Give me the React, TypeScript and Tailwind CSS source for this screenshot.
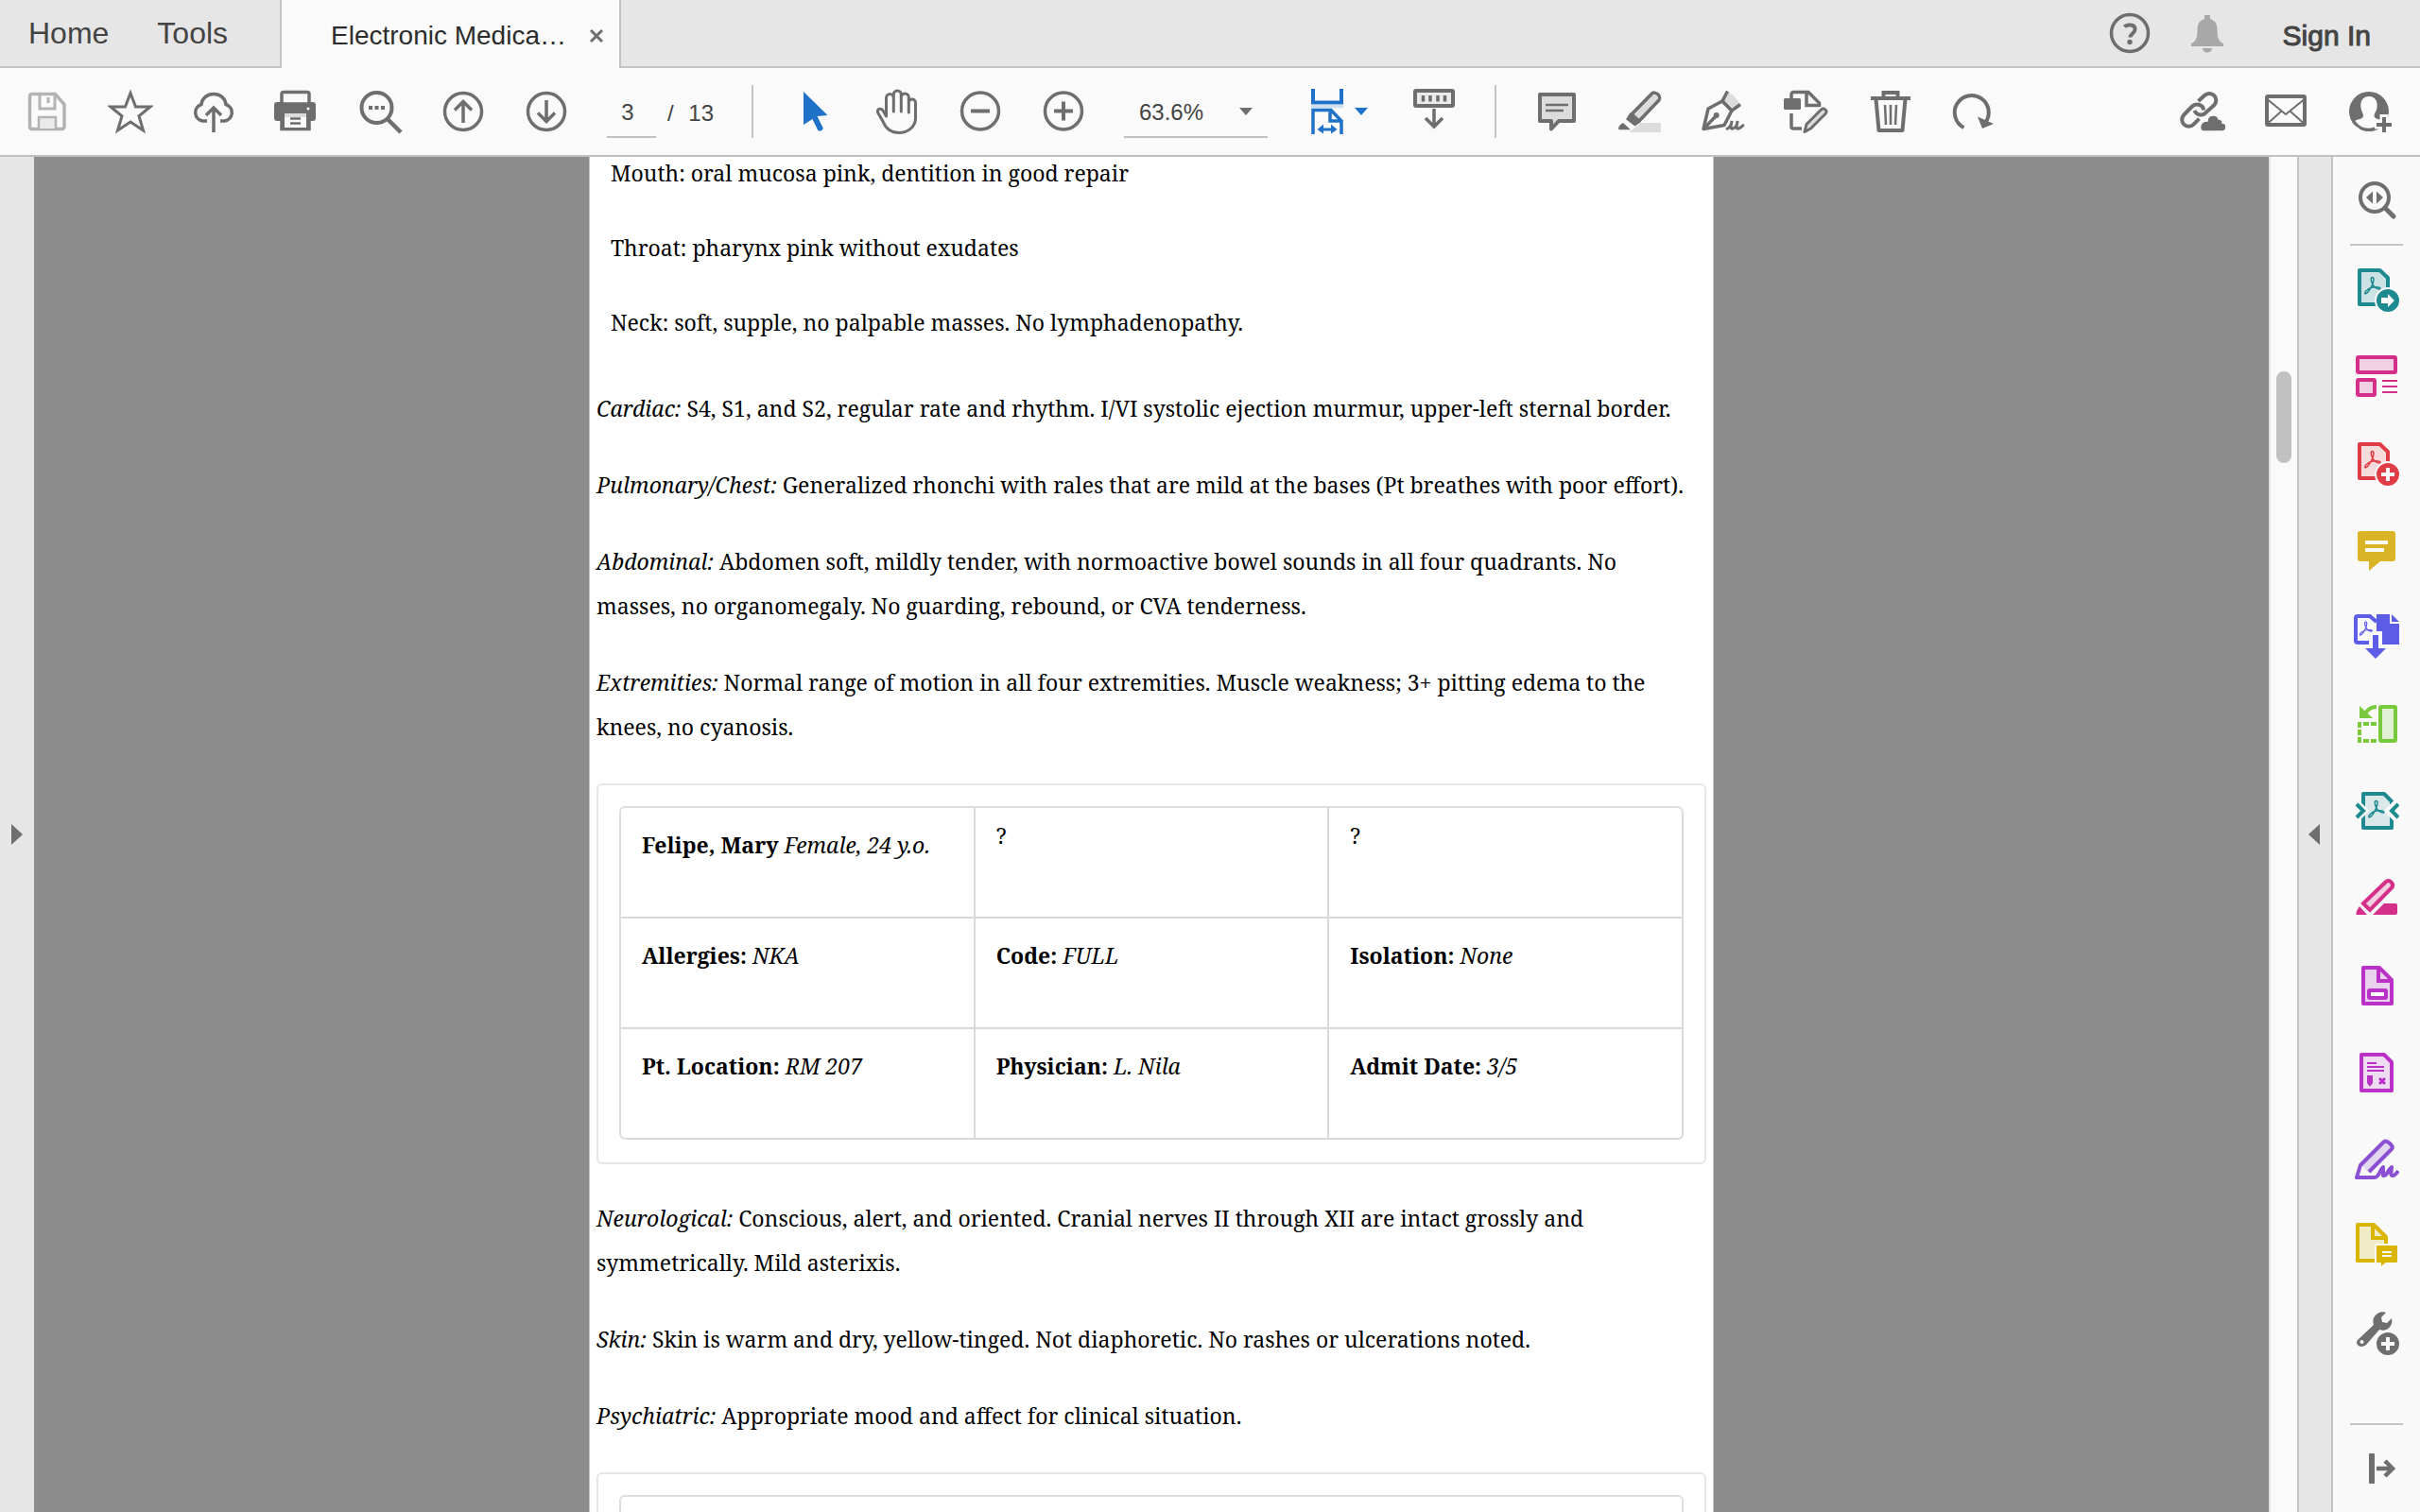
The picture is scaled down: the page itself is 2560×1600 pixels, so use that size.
import type { JSX, ReactNode } from 'react';

interface IconProps {
  children: ReactNode;
  className?: string;
}

interface IconButtonProps extends IconProps {
  label: string;
}

interface PatientField {
  label?: string;
  value: string;
}

const PATIENT_ROWS: PatientField[][] = [
  [{ label: 'Felipe, Mary', value: 'Female, 24 y.o.' }, { value: '?' }, { value: '?' }],
  [
    { label: 'Allergies:', value: 'NKA' },
    { label: 'Code:', value: 'FULL' },
    { label: 'Isolation:', value: 'None' },
  ],
  [
    { label: 'Pt. Location:', value: 'RM 207' },
    { label: 'Physician:', value: 'L. Nila' },
    { label: 'Admit Date:', value: '3/5' },
  ],
];

const HEAD_AND_NECK = [
  'Mouth: oral mucosa pink, dentition in good repair',
  'Throat: pharynx pink without exudates',
  'Neck: soft, supple, no palpable masses. No lymphadenopathy.',
];

const Icon = ({ children, className = 'text-[#6e6e6e]' }: IconProps): JSX.Element => (
  <svg viewBox="0 0 48 48" className={`size-12 ${className}`} fill="none" stroke="currentColor" strokeWidth="3.5" aria-hidden="true">
    {children}
  </svg>
);

const ToolButton = ({ label, children, className }: IconButtonProps): JSX.Element => (
  <button type="button" aria-label={label} className="shrink-0">
    <Icon className={className}>{children}</Icon>
  </button>
);

const SideButton = ({ label, children, className }: IconButtonProps): JSX.Element => (
  <button type="button" aria-label={label} className="flex h-[92px] w-full shrink-0 items-center justify-center">
    <Icon className={className}>{children}</Icon>
  </button>
);

const Divider = (): JSX.Element => <div className="ml-10 h-14 w-0.5 shrink-0 bg-[#c4c4c4]" />;

// The looped "A" drawn inside the document icons
const AcrobatMark = ({ x, y, size = 1 }: { x: number; y: number; size?: number }): JSX.Element => (
  <path
    transform={`translate(${x} ${y}) scale(${size})`}
    strokeWidth="1.5"
    d="M-.5-8.5c-2 0-1.5 4 .5 7.5 2 3.5 5 5 7 5 1.500 0 1.500-2-1-2-4.500-.5-9 .5-12 3-2.500 2-3 4-1.500 3.800C-4.500 8.500 1-2 1-6.500c0-1.500-.5-2-1.500-2z"
  />
);

const TabBar = (): JSX.Element => (
  <header className="flex h-[72px] shrink-0 bg-[#e6e6e6] text-[#444]">
    <nav className="flex w-[296px] items-center gap-[51px] border-b-2 border-[#c4c4c4] pl-[30px] text-[32px]">
      <a href="#home">Home</a>
      <a href="#tools">Tools</a>
    </nav>
    <div className="flex w-[361px] items-center border-x-2 border-[#c4c4c4] bg-[#fafafa] pt-1 pl-[52px] text-[#2c2c2c]">
      <span className="w-[272px] text-[28px] whitespace-nowrap">Electronic Medica…</span>
      <button type="button" aria-label="Close tab">
        <svg viewBox="0 0 18 18" className="size-[18px]" stroke="#6e6e6e" strokeWidth="3">
          <path d="M3 3l12 12M15 3L3 15" />
        </svg>
      </button>
    </div>
    <div className="flex flex-1 items-center justify-end border-b-2 border-[#c4c4c4] pr-[52px]">
      <ToolButton label="Help">
        <circle cx="24" cy="24" r="19.5" />
        <path d="M18.5 17.500c2-2.500 11-3.500 11 2.500 0 4.500-5 4.500-5 8.500" strokeWidth="4" />
        <circle cx="24" cy="33.5" r="2.7" fill="currentColor" stroke="none" />
      </ToolButton>
      <button type="button" aria-label="Notifications" className="ml-[34px]">
        <Icon className="text-[#a8a8a8]">
          <path
            d="M21 5h6v4c6 2 7.5 6 7.500 12 0 9 2 12 6.500 14v3H7v-3c4.500-2 6.500-5 6.500-14 0-6 1.500-10 7.500-12zM19 40h10c0 6-10 6-10 0z"
            fill="currentColor"
            stroke="none"
          />
        </Icon>
      </button>
      <button type="button" className="ml-14 pt-1 text-[30px] [-webkit-text-stroke:1px_#444]">
        Sign In
      </button>
    </div>
  </header>
);

const Toolbar = (): JSX.Element => (
  <div className="flex h-[94px] shrink-0 items-center border-b-2 border-[#c0c0c0] bg-[#fafafa] pr-[30px] pl-[26px] text-2xl text-[#444]">
    <div className="flex gap-10">
      <ToolButton label="Save" className="text-[#b3b3b3]">
        <path d="M7.5 5.5h25L42 16.5V40a2.500 2.500 0 0 1-2.500 2.500h-32A2.500 2.500 0 0 1 5.500 40V8a2.500 2.500 0 0 1 2-2.500z" />
        <path d="M16 6v15h16V6M25 9v6" strokeWidth="3" />
        <path d="M15 42V30h18v12" fill="#ebebeb" strokeWidth="2.5" />
      </ToolButton>
      <ToolButton label="Bookmark">
        <path d="M24 4.500L29.500 19H45L33 28.800 37.500 44 24 35l-13.500 9L15 28.800 3 19h15.500z" strokeWidth="3" />
      </ToolButton>
      <ToolButton label="Upload">
        <path d="M17 34h-4.500a9 9 0 0 1-1.500-17.500C11.500 10 17 5.500 24 5.500S36.500 10 37 16.500A9 9 0 0 1 35.500 34H31" />
        <path d="M24 46V21M16 28l8-8 8 8" />
      </ToolButton>
      <ToolButton label="Print">
        <rect x="0" y="14" width="44" height="20" rx="3" fill="currentColor" stroke="none" />
        <path d="M8 16V5.500a2 2 0 0 1 2-2h25a2 2 0 0 1 2 2V16z" fill="#fafafa" />
        <path d="M8 30v12.500h29V30" fill="currentColor" />
        <rect x="11" y="26" width="23" height="4" fill="#dcdcdc" stroke="none" />
        <rect x="11" y="30" width="23" height="11" fill="#fafafa" stroke="none" />
        <path d="M17 31.500h11M17 36.500h11" strokeWidth="2.5" />
        <circle cx="36" cy="21" r="1.5" fill="#fafafa" stroke="none" />
      </ToolButton>
      <ToolButton label="Find text">
        <circle cx="20.5" cy="20" r="16" strokeWidth="4" />
        <path d="M32 32l14 14" strokeWidth="4.5" />
        <path d="M12 20h4M18.500 20h4M25 20h4" strokeWidth="4" />
      </ToolButton>
      <ToolButton label="Previous page">
        <circle cx="24" cy="24" r="19.5" />
        <path d="M24 36V14M15 22.500l9-9 9 9" />
      </ToolButton>
      <ToolButton label="Next page">
        <circle cx="24" cy="24" r="19.5" />
        <path d="M24 12v22M15 25.500l9 9 9-9" />
      </ToolButton>
    </div>
    <input aria-label="Page number" defaultValue="3" className="ml-10 h-14 w-[52px] border-b-2 border-[#c0c0c0] pt-1 pr-2 text-center" />
    <span className="ml-3 flex w-[49px] justify-between pt-1">
      <span>/</span>
      <span>13</span>
    </span>
    <Divider />
    <div className="ml-10 flex gap-10">
      <ToolButton label="Select" className="text-[#2072c9]">
        <path d="M13 3l25.500 25-11 1 6 12c1 3-4 5-5.500 2.500L22.500 32 13 38z" fill="currentColor" stroke="none" />
      </ToolButton>
      <ToolButton label="Pan">
        <path
          strokeWidth="3"
          strokeLinecap="round"
          d="M12.500 29V9.500a3.900 3.900 0 0 1 7.800 0V24M20.300 22V6a4 4 0 0 1 8 0v18M28.300 9a4 4 0 0 1 8 0v16M36.300 14.500a3.600 3.600 0 0 1 7.200 0V31c0 9-8 15.500-17.500 15.500-9 0-14-4.500-17-12L3.800 25.500c-1.500-4.500 3-5.500 5.200-2.500l3.500 6"
        />
      </ToolButton>
      <ToolButton label="Zoom out">
        <circle cx="24" cy="23.5" r="19.5" />
        <path d="M14 23.500h20" strokeWidth="4" />
      </ToolButton>
      <ToolButton label="Zoom in">
        <circle cx="24" cy="23.5" r="19.5" />
        <path d="M14 23.500h20M24 13.500v20" strokeWidth="4" />
      </ToolButton>
    </div>
    <label className="relative ml-10 block w-[152px] shrink-0">
      <select aria-label="Zoom level" className="h-14 w-full appearance-none border-b-2 border-[#c0c0c0] bg-transparent pt-1 pl-4">
        <option>63.6%</option>
      </select>
      <svg viewBox="0 0 14 8" className="pointer-events-none absolute top-6 right-4 h-2 w-3.5" fill="#6e6e6e">
        <path d="M0 0h14L7 8z" />
      </svg>
    </label>
    <button type="button" aria-label="Fit width" className="ml-10 flex items-center gap-1 text-[#2072c9]">
      <Icon className="text-[#2072c9]">
        <path d="M8 0v14.500h30V0" strokeWidth="4" />
        <path d="M6 18.500h34" stroke="#cfdff2" />
        <path d="M8 48V22.500h19L38 34v14M26 23v11h12" />
        <path d="M15 43h16" strokeWidth="3" />
        <path d="M19 37.500v10L12.500 43zM27 37.500v10l6.500-4.500z" fill="currentColor" stroke="none" />
      </Icon>
      <svg viewBox="0 0 14 8" className="h-2 w-3.5" fill="currentColor">
        <path d="M0 0h14L7 8z" />
      </svg>
    </button>
    <div className="ml-[46px]">
      <ToolButton label="Show keyboard bar">
        <rect x="4" y="6" width="40" height="16" rx="1" fill="#ebebeb" strokeWidth="4" />
        <path d="M12.500 11v6.500M20 11v6.500M28 11v6.500M35.500 11v6.500" />
        <path d="M24 25v18M15 35l9 9 9-9" />
      </ToolButton>
    </div>
    <Divider />
    <div className="ml-10 flex gap-10">
      <ToolButton label="Comment">
        <path d="M6 6h36v28H26l-8 8.500V34H6z" fill="#dcdcdc" strokeWidth="4" strokeLinejoin="round" />
        <path d="M12 17h24M12 23h19" strokeWidth="2.5" />
      </ToolButton>
      <ToolButton label="Highlight">
        <path d="M24.500 36H46v10H12.500z" fill="#dcdcdc" stroke="none" />
        <path d="M36 5.500c3-4 11 1.500 8 6.500L23 34l-8-7z" fill="#dcdcdc" />
        <path d="M13.500 26.500l10 8.500-5 3.500L10 32z" fill="currentColor" strokeWidth="1.5" />
        <path d="M6 37l6 5.500H2c-.5-1.500 1.500-4 4-5.500z" fill="currentColor" strokeWidth="1.5" />
      </ToolButton>
      <ToolButton label="Sign">
        <path d="M24 11l4.500-8C33 5 38 10 41 15.500L34 20z" fill="#dcdcdc" stroke="none" />
        <path d="M28.500 2.500L23 13l10 10 9-6.500" />
        <path d="M3 42.500L8 21l15-8 10 10-8 15.500zM3 42.500L16 29" strokeLinejoin="round" />
        <circle cx="16.7" cy="28" r="3" fill="currentColor" stroke="none" />
        <path d="M27 43c4-2 6-5 6-9-1 5-2 9 1 8s5-4 5-8c-1 5-2 9 1 8s4-3 6-4" strokeWidth="3" />
      </ToolButton>
      <ToolButton label="Edit page">
        <rect x="0" y="10" width="18" height="12" rx="1.5" fill="currentColor" stroke="none" />
        <path d="M8 11V6a2.500 2.500 0 0 1 2.500-2.500H26L37.500 15v4M24 4v13.500h14M8 26v14a2 2 0 0 0 2 2h9" />
        <path d="M24 37.500L39.500 22c3-2.500 7.500 1 4.500 4.500L28.500 42 22 45.500z" fill="#dcdcdc" strokeWidth="3" strokeLinejoin="round" />
      </ToolButton>
      <ToolButton label="Delete">
        <path d="M4 10h42M17.500 9V4h15v5" strokeWidth="4" />
        <path d="M9.500 11l3 33h25l3-33" strokeWidth="4" strokeLinejoin="round" />
        <path d="M19 17l1 21M25 17v21M31 17l-1 21" strokeWidth="2.5" />
      </ToolButton>
      <ToolButton label="Rotate">
        <path d="M14.500 41A18 18 0 1 1 37 36" strokeWidth="4" />
        <path d="M29 29.500l17 7.500-12 5z" fill="currentColor" stroke="none" />
      </ToolButton>
    </div>
    <div className="ml-auto flex gap-10">
      <ToolButton label="Share link">
        <path d="M19.500 13L26 7a7.200 7.200 0 0 1 10.200 10.200L26 26.500a7.200 7.200 0 0 1-10.500-3.500" strokeWidth="4" />
        <path d="M25 22.500c0-5-7.500-8.500-12.500-3.500L4.300 27.500a7.200 7.200 0 0 0 10.200 10.200l6-6" strokeWidth="4" />
        <path
          d="M25 45h19a4.500 4.500 0 0 0 1-9c.5-3-2-4-4-4-1.500-6-12-5-12 2-4 0-7 1-7.500 6.500 0 2.500 1.500 4.500 3.500 4.500z"
          fill="currentColor"
          stroke="#fafafa"
          strokeWidth="1.5"
        />
      </ToolButton>
      <ToolButton label="Send by email">
        <rect x="4" y="8" width="40" height="30" rx="1" strokeWidth="4" />
        <path d="M5 11.500L24 27l19-15.500M5 36.500l14-12.500M43 36.500L29 24" strokeWidth="2" />
      </ToolButton>
      <ToolButton label="Add people">
        <circle cx="24" cy="24" r="21" fill="currentColor" stroke="none" />
        <path
          d="M24 8c7 0 9.500 6 8.500 12-.6 4-3 6-3 8.500 0 4 7 3 10 6.500l-4 7H12l-4-7c3-3.500 10-2.500 10-6.500 0-2.500-2-4.500-2.500-8.500C14.500 14 17 8 24 8z"
          fill="#fafafa"
          stroke="none"
        />
        <path d="M8 34.500c7 10 16 10 24 7" strokeWidth="3" />
        <path d="M40 27v20M30 38h18" stroke="#fafafa" strokeWidth="9" />
        <path d="M40 30v16M32 38h16" strokeWidth="4" />
      </ToolButton>
    </div>
  </div>
);

const PatientCell = ({ label, value }: PatientField): JSX.Element =>
  label ? (
    <div className="pt-4">
      <strong>{label}</strong> <em>{value}</em>
    </div>
  ) : (
    <div className="pt-1.5">{value}</div>
  );

const PatientBanner = (): JSX.Element => (
  <section className="mt-0.5 rounded-md border-2 border-[#e6e6e6] px-[22px] pt-[22px] pb-6">
    <table className="w-full table-fixed border-separate border-spacing-0 rounded-md border-t-2 border-l-2 border-[#dedede]">
      <tbody>
        {PATIENT_ROWS.map((row, rowIndex) => (
          <tr key={rowIndex}>
            {row.map((field, index) => (
              <td
                key={index}
                className={`h-[117px] border-r-2 border-b-2 border-[#dadada] p-0 pl-[22px] align-top ${
                  rowIndex === 0 && index === 2 ? 'rounded-tr-md' : ''
                } ${rowIndex === 2 && index === 0 ? 'rounded-bl-md' : ''} ${rowIndex === 2 && index === 2 ? 'rounded-br-md' : ''}`}
              >
                <PatientCell {...field} />
              </td>
            ))}
          </tr>
        ))}
      </tbody>
    </table>
  </section>
);

const DocumentPage = (): JSX.Element => (
  <article className="mx-auto flex min-h-full w-full max-w-[1190px] flex-col gap-[34px] border-x border-[#c4c4c4] bg-white px-[7px] pt-px font-['Noto_Serif','Liberation_Serif',serif] text-[23px] leading-[47px] text-black">
    <ul className="mb-[18px] flex flex-col gap-[47px] pl-[15px] leading-8">
      {HEAD_AND_NECK.map((line) => (
        <li key={line}>{line}</li>
      ))}
    </ul>
    <p>
      <em>Cardiac:</em> S4, S1, and S2, regular rate and rhythm. I/VI systolic ejection murmur, upper-left sternal border.
    </p>
    <p>
      <em>Pulmonary/Chest:</em> Generalized rhonchi with rales that are mild at the bases (Pt breathes with poor effort).
    </p>
    <p>
      <em>Abdominal:</em> Abdomen soft, mildly tender, with normoactive bowel sounds in all four quadrants. No
      <br />
      masses, no organomegaly. No guarding, rebound, or CVA tenderness.
    </p>
    <p>
      <em>Extremities:</em> Normal range of motion in all four extremities. Muscle weakness; 3+ pitting edema to the
      <br />
      knees, no cyanosis.
    </p>
    <PatientBanner />
    <p>
      <em>Neurological:</em> Conscious, alert, and oriented. Cranial nerves II through XII are intact grossly and
      <br />
      symmetrically. Mild asterixis.
    </p>
    <p>
      <em>Skin:</em> Skin is warm and dry, yellow-tinged. Not diaphoretic. No rashes or ulcerations noted.
    </p>
    <p>
      <em>Psychiatric:</em> Appropriate mood and affect for clinical situation.
    </p>
    {/* top edge of the next patient banner, the rest is below the fold */}
    <section className="mt-0.5 rounded-md border-2 border-[#e6e6e6] px-[22px] pt-[22px] pb-6">
      <div className="h-[353px] rounded-md border-2 border-[#dedede]" />
    </section>
  </article>
);

const ToolsPane = (): JSX.Element => (
  <aside className="flex w-[92px] shrink-0 flex-col items-center bg-[#f9f9f9]">
    <SideButton label="Search tools">
      <circle cx="22" cy="21" r="15" fill="#f9f9f9" strokeWidth="4" />
      <path d="M33 32l9 9" strokeWidth="5" strokeLinecap="round" />
      <path d="M13 21l7-6.500v13zM31 21l-7-6.500v13z" fill="currentColor" stroke="none" />
    </SideButton>
    <div className="h-0.5 w-14 shrink-0 bg-[#c4c4c4]" />
    <SideButton label="Export PDF" className="text-[#1c8a8f]">
      <path d="M6 4h21.500L36 12v28H6z" fill="#cde2e4" strokeWidth="4" strokeLinejoin="round" />
      <AcrobatMark x={20} y={20} />
      <circle cx="36" cy="36" r="13" fill="currentColor" stroke="#f9f9f9" strokeWidth="2" />
      <path d="M29 33h7v-4l7 7-7 7v-4h-7z" fill="#f9f9f9" stroke="none" />
    </SideButton>
    <SideButton label="Organize pages" className="text-[#d4308a]">
      <rect x="4" y="4" width="40" height="16" rx="1" fill="#f2d0e3" strokeWidth="4" />
      <rect x="4" y="28" width="18" height="16" rx="1" fill="#f2d0e3" strokeWidth="4" />
      <path d="M30 29h16M30 35h16M30 41h16" strokeWidth="2" />
    </SideButton>
    <SideButton label="Create PDF" className="text-[#e03c46]">
      <path d="M6 4h21.500L36 12v28H6z" fill="#f6dbdc" strokeWidth="4" strokeLinejoin="round" />
      <AcrobatMark x={20} y={20} />
      <circle cx="36" cy="36" r="13" fill="currentColor" stroke="#f9f9f9" strokeWidth="2" />
      <path d="M36 29v14M29 36h14" stroke="#f9f9f9" strokeWidth="4" />
    </SideButton>
    <SideButton label="Comment" className="text-[#d9b427]">
      <path d="M7 4h34a3 3 0 0 1 3 3v26a3 3 0 0 1-3 3H28L16 46V36H7a3 3 0 0 1-3-3V7a3 3 0 0 1 3-3z" fill="currentColor" stroke="none" />
      <path d="M12 16h24M12 24h20" stroke="#f9f9f9" strokeWidth="4" />
    </SideButton>
    <SideButton label="Combine files" className="text-[#5c5ce6]">
      <path d="M16 30H4a2 2 0 0 1-2-2V4a2 2 0 0 1 2-2h13l7 6" strokeWidth="4" />
      <AcrobatMark x={13} y={15} size={0.8} />
      <path d="M24 0h14v10h10v22H30V18h-6zM40 0l8 8h-8z" fill="currentColor" stroke="none" />
      <path d="M20 22h6v14h8L23 47 12 36h8z" fill="currentColor" stroke="none" />
    </SideButton>
    <SideButton label="Rotate pages" className="text-[#78ca3c]">
      <rect x="28" y="6" width="16" height="36" rx="1" fill="#dff0d3" strokeWidth="4" />
      <path d="M10 24h6M18 24h6M10 42h6M18 42h6M6 22v6M6 30v6M6 38v6" strokeWidth="4" />
      <path d="M24 6c-6 0-9 2-12 7" strokeWidth="4" />
      <path d="M6 5v13h14z" fill="currentColor" stroke="none" />
    </SideButton>
    <SideButton label="Compress PDF" className="text-[#1c8a8f]">
      <path d="M10 6h22l8 8v28H10z" fill="#dae8e9" strokeWidth="4" strokeLinejoin="round" />
      <AcrobatMark x={24} y={22} />
      <path d="M3 17l7 7-7 7M45 17l-7 7 7 7" stroke="#f9f9f9" strokeWidth="9" />
      <path d="M3 17l7 7-7 7M47 17l-7 7 7 7" strokeWidth="4" />
    </SideButton>
    <SideButton label="Redact" className="text-[#d4308a]">
      <path d="M20 42l12-12h12a2 2 0 0 1 2 2v8a2 2 0 0 1-2 2z" fill="currentColor" stroke="none" />
      <path d="M34 7c3-3 9 2 6.500 6L17 37l-7-7z" fill="#f2d0e3" strokeWidth="4" />
      <path d="M6 33l8 9H2.500C2 39 4 36 6 33z" fill="currentColor" stroke="none" />
    </SideButton>
    <SideButton label="Prepare form" className="text-[#b931c7]">
      <path d="M10 6h17l13 13v25H10z" fill="#ead2ee" strokeWidth="4" strokeLinejoin="round" />
      <path d="M26 6v14h14" strokeWidth="4" />
      <rect x="16" y="30" width="18" height="8" rx="1" fill="#f9f9f9" strokeWidth="4" />
    </SideButton>
    <SideButton label="Request signatures" className="text-[#b931c7]">
      <path d="M8 6h24l8 8v30H8z" fill="#efdcf2" strokeWidth="4" strokeLinejoin="round" />
      <path d="M14 15h10M14 19h18M14 23h18" strokeWidth="2" />
      <path d="M14 28h6v8l-3 4-3-4z" fill="currentColor" stroke="none" />
      <path d="M27 31l6 6M33 31l-6 6" strokeWidth="3" />
    </SideButton>
    <SideButton label="Fill and sign" className="text-[#8a4fd3]">
      <path d="M7 30L32.500 4.500l8.500 8.500L16 39z" fill="#e2d8f0" stroke="none" />
      <path
        d="M16 38L40 14c2-2 0-4-2-6-3-3-5-3-7-1L7 31 3 44h19c5 0 5-8 9-11v9c4 1 5-6 9-9 0 4-2 9 1 9 2 0 4-2 6-5"
        strokeWidth="4"
        strokeLinejoin="round"
      />
    </SideButton>
    <SideButton label="Send for comments" className="text-[#dab500]">
      <path d="M4 2h17l13 13v25H4z" fill="#f1ebc8" strokeWidth="4" strokeLinejoin="round" />
      <path d="M20 2v14h14" strokeWidth="4" />
      <path
        d="M25 23h20a2 2 0 0 1 2 2v16a2 2 0 0 1-2 2H34l-6 5v-5h-3a2 2 0 0 1-2-2V25a2 2 0 0 1 2-2z"
        fill="currentColor"
        stroke="#f9f9f9"
        strokeWidth="2"
      />
      <path d="M30 31h10M30 35h10" stroke="#f9f9f9" strokeWidth="2" />
    </SideButton>
    <SideButton label="More tools">
      <path
        d="M4.500 31.500L21 16C18 8 26 0 34 3l-5 5 1 5 5 1 5-5c2 8-5 15-13 12L13 37c-6 5-13-1-8.500-5.500z"
        fill="currentColor"
        stroke="none"
      />
      <circle cx="8.5" cy="34" r="2" fill="#f9f9f9" stroke="none" />
      <circle cx="36" cy="36" r="13" fill="currentColor" stroke="#f9f9f9" strokeWidth="2" />
      <path d="M36 29v14M29 36h14" stroke="#f9f9f9" strokeWidth="4" />
    </SideButton>
    <div className="mt-auto h-0.5 w-14 shrink-0 bg-[#c4c4c4]" />
    <SideButton label="Collapse tools">
      <rect x="16" y="8" width="6" height="32" rx="1" fill="currentColor" stroke="none" />
      <path d="M24 24h17M33 16l8 8-8 8" strokeWidth="4.5" />
    </SideButton>
  </aside>
);

export default function App(): JSX.Element {
  return (
    <div className="flex h-screen flex-col overflow-hidden font-['Liberation_Sans',Arial,sans-serif]">
      <TabBar />
      <Toolbar />
      <div className="flex min-h-0 flex-1">
        <button type="button" aria-label="Open navigation pane" className="flex w-9 shrink-0 items-center justify-center bg-[#e6e6e6]">
          <svg viewBox="0 0 12 22" className="h-[22px] w-3" fill="#6e6e6e">
            <path d="M0 0l12 11L0 22z" />
          </svg>
        </button>
        <main className="min-w-0 flex-1 overflow-hidden bg-[#8d8d8d]">
          <DocumentPage />
        </main>
        <div className="w-8 shrink-0 border-r-2 border-l-2 border-r-[#c4c4c4] border-l-[#e2e2e2] bg-[#fafafa] pt-[227px]">
          <div className="mx-auto h-[97px] w-4 rounded-full bg-[#c1c1c1]" />
        </div>
        <button
          type="button"
          aria-label="Close tools pane"
          className="flex w-9 shrink-0 items-center justify-center border-r-2 border-[#c4c4c4] bg-[#e6e6e6] pr-0.5"
        >
          <svg viewBox="0 0 12 22" className="h-[22px] w-3" fill="#6e6e6e">
            <path d="M12 0L0 11l12 11z" />
          </svg>
        </button>
        <ToolsPane />
      </div>
    </div>
  );
}
